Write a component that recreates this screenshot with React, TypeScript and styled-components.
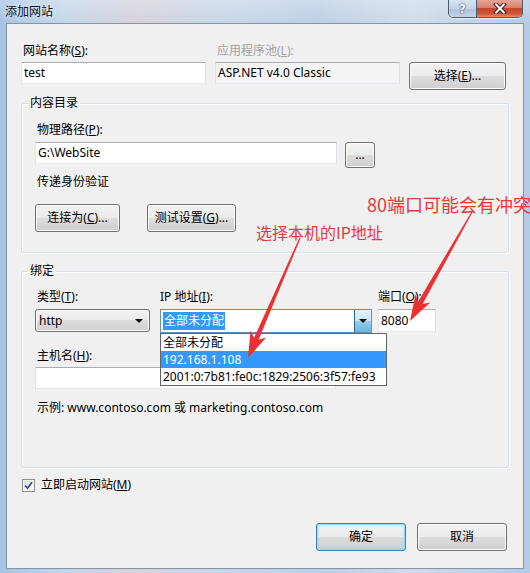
import React from "react";
import styled, { createGlobalStyle } from "styled-components";

const Global = createGlobalStyle`
  html, body { margin: 0; padding: 0; }
  body {
    width: 530px; height: 573px; overflow: hidden;
    font-family: "Noto Sans", "Noto Sans CJK SC", sans-serif;
    font-size: 12px; color: #000;
  }
  * { box-sizing: border-box; }
`;

const Window = styled.div`
  position: relative;
  width: 530px;
  height: 573px;
  display: flex;
  flex-direction: column;
  background:
    linear-gradient(180deg, rgba(255,255,255,0.25) 0px, rgba(255,255,255,0) 23px),
    linear-gradient(90deg, #a7c3e3 0%, #c4d6ea 12%, #d6d2dc 26%, #c7d7ea 42%, #bccfe6 60%, #cfdcea 78%, #b4cbe6 100%);
`;

const TitleBar = styled.div`
  height: 23px;
  display: flex;
  align-items: flex-start;
  padding: 0 7px 0 5px;
`;

const Caption = styled.div`
  margin-top: 3px;
  line-height: 16px;
  font-size: 12px;
  font-family: "Noto Sans CJK SC", sans-serif;
  color: #111;
  text-shadow: 0 0 6px rgba(255,255,255,0.9);
`;

const CaptionButtons = styled.div`
  margin-left: auto;
  display: flex;
  border: 1px solid #4b5d75;
  border-top: none;
  border-radius: 0 0 5px 5px;
  overflow: hidden;
  box-shadow: 0 1px 0 rgba(255,255,255,0.6);
`;

const HelpButton = styled.div`
  width: 28px;
  height: 17px;
  display: flex;
  align-items: center;
  justify-content: center;
  border-right: 1px solid #4b5d75;
  background: linear-gradient(180deg, #d9e4f1 0%, #c5d4e6 50%, #afc2da 51%, #c3d3e6 100%);
  color: #fff;
  font-family: "DejaVu Sans", sans-serif;
  font-weight: bold;
  font-size: 12px;
  line-height: 1;
  text-shadow: 0 0 1px #2b3b52, 0 0 2px #2b3b52;
`;

const CloseButton = styled.div`
  width: 45px;
  height: 17px;
  display: flex;
  align-items: center;
  justify-content: center;
  background: linear-gradient(180deg, #e8a597 0%, #d9806b 45%, #c4452c 50%, #d2553a 80%, #e58e71 100%);
`;

const Client = styled.div`
  flex: 1;
  margin: 0 6px 4px 6px;
  background: #f0f0f0;
  border: 1px solid #8294aa;
  display: flex;
  flex-direction: column;
  padding: 19px 14px 17px 14px;
`;

const TopGrid = styled.div`
  display: grid;
  grid-template-columns: 185px 185px 98px;
  grid-template-rows: 16px auto;
  column-gap: 9px;
  row-gap: 3px;
  align-items: start;
`;

const Label = styled.div<{ $disabled?: boolean; $pl?: number }>`
  line-height: 16px;
  height: 16px;
  white-space: nowrap;
  padding-left: ${(p) => (p.$pl ?? 2)}px;
  color: ${(p) => (p.$disabled ? "#a2a2a2" : "#000")};
`;

const SpacedLabel = styled(Label)<{ $mt: number }>`
  margin-top: ${(p) => p.$mt}px;
`;

const U = styled.span`
  text-decoration: underline;
  text-underline-offset: 1px;
`;

const TextBox = styled.div<{ $w?: number; $h?: number; $readonly?: boolean }>`
  width: ${(p) => (p.$w ? `${p.$w}px` : "100%")};
  height: ${(p) => p.$h ?? 22}px;
  border: 1px solid;
  border-color: #abadb3 #dbdfe6 #e3e9ef #e2e3ea;
  background: ${(p) => (p.$readonly ? "#f4f4f4" : "#fff")};
  padding-left: 2px;
  line-height: ${(p) => (p.$h ?? 22) - 2}px;
  white-space: nowrap;
  overflow: hidden;
`;

const Button = styled.div<{ $w: number; $h?: number; $default?: boolean }>`
  width: ${(p) => p.$w}px;
  height: ${(p) => p.$h ?? 28}px;
  border: 1px solid ${(p) => (p.$default ? "#3c7fb1" : "#707070")};
  border-radius: 3px;
  background: linear-gradient(180deg, #f2f2f2 0%, #ebebeb 49%, #dddddd 50%, #cfcfcf 100%);
  box-shadow: ${(p) =>
    p.$default
      ? "inset 0 0 0 1px #8ee0f9, inset 0 0 3px 1px rgba(120,215,250,0.55)"
      : "inset 0 0 0 1px #fcfcfc"};
  display: flex;
  align-items: center;
  justify-content: center;
  white-space: nowrap;
  line-height: 16px;
`;

const Group = styled.fieldset<{ $mt: number; $pt: number; $pb: number }>`
  margin: ${(p) => p.$mt}px 0 0 0;
  padding: ${(p) => p.$pt}px 13px ${(p) => p.$pb}px 13px;
  border: 1px solid #d5dfe5;
  border-radius: 3px;
  box-shadow: inset 1px 1px 0 #fff, 1px 1px 0 #fff;
  min-width: 0;
`;

const Legend = styled.legend`
  padding: 0 2px;
  margin-left: -7px;
  line-height: 16px;
  font-size: 12px;
`;

const Row = styled.div<{ $mt: number; $gap: number }>`
  display: flex;
  align-items: flex-start;
  margin-top: ${(p) => p.$mt}px;
  gap: ${(p) => p.$gap}px;
`;

const Field = styled.div<{ $w: number; $mr?: number }>`
  width: ${(p) => p.$w}px;
  margin-right: ${(p) => p.$mr ?? 0}px;
  display: flex;
  flex-direction: column;
  gap: 4px;
`;

const SelectBox = styled.div`
  position: relative;
  height: 23px;
  border: 1px solid #707070;
  border-radius: 3px;
  background: linear-gradient(180deg, #f2f2f2 0%, #ebebeb 49%, #dddddd 50%, #cfcfcf 100%);
  box-shadow: inset 0 0 0 1px #fcfcfc;
  display: flex;
  align-items: center;
  padding-left: 3px;
  line-height: 16px;
`;

const Caret = styled.span<{ $right: number }>`
  position: absolute;
  right: ${(p) => p.$right}px;
  top: 50%;
  margin-top: -2px;
  width: 0;
  height: 0;
  border-left: 4px solid transparent;
  border-right: 4px solid transparent;
  border-top: 4px solid #111;
`;

const ComboBox = styled.div`
  position: relative;
  height: 24px;
  border: 1px solid #5c93bc;
  background: #fff;
  display: flex;
  align-items: center;
  padding-left: 2px;
`;

const Highlight = styled.span`
  background: #3399ff;
  color: #fff;
  line-height: 18px;
  padding: 0 1px;
`;

const ComboButton = styled.div`
  position: absolute;
  right: 0;
  top: 0;
  bottom: 0;
  width: 17px;
  border-left: 1px solid #2c628b;
  background: linear-gradient(180deg, #e5f4fc 0%, #c4e5f6 50%, #98d1ef 51%, #68b3db 100%);
`;

const DropList = styled.div`
  position: absolute;
  left: -1px;
  top: calc(100% + 1px);
  width: 227px;
  border: 1px solid #646464;
  background: #fff;
  z-index: 5;
`;

const DropItem = styled.div<{ $sel?: boolean }>`
  height: 17px;
  line-height: 17px;
  padding-left: 2px;
  white-space: nowrap;
  background: ${(p) => (p.$sel ? "#3399ff" : "#fff")};
  color: ${(p) => (p.$sel ? "#fff" : "#000")};
`;

const CheckRow = styled.div`
  display: flex;
  align-items: center;
  gap: 6px;
  margin-top: 9px;
  margin-left: 1px;
  height: 16px;
  line-height: 16px;
`;

const CheckBox = styled.div`
  width: 13px;
  height: 13px;
  border: 1px solid #8e8f8f;
  background: linear-gradient(135deg, #dcdcdc 0%, #fdfdfd 100%);
  box-shadow: inset 0 0 0 1px #f4f4f4;
  display: flex;
  align-items: center;
  justify-content: center;
`;

const Footer = styled.div`
  margin-top: auto;
  margin-right: 2px;
  display: flex;
  justify-content: flex-end;
  gap: 11px;
`;

const Overlay = styled.svg`
  position: absolute;
  left: 0;
  top: 0;
  width: 530px;
  height: 573px;
  pointer-events: none;
  z-index: 20;
`;

const Note = styled.div<{ $x: number; $y: number; $size: number; $ls?: number }>`
  position: absolute;
  left: ${(p) => p.$x}px;
  top: ${(p) => p.$y}px;
  z-index: 21;
  color: #e23a3a;
  font-family: "Noto Sans CJK SC", sans-serif;
  font-size: ${(p) => p.$size}px;
  line-height: 20px;
  letter-spacing: ${(p) => p.$ls ?? 0}px;
  white-space: nowrap;
`;

function arrowPoints(x1: number, y1: number, x2: number, y2: number): string {
  const dx = x2 - x1;
  const dy = y2 - y1;
  const L = Math.hypot(dx, dy);
  const ux = dx / L;
  const uy = dy / L;
  const px = -uy;
  const py = ux;
  const headLen = 26;
  const headW = 17;
  const tailW = 1.2;
  const neckW = 5;
  const bx = x2 - ux * headLen;
  const by = y2 - uy * headLen;
  const nx = bx + ux * 5;
  const ny = by + uy * 5;
  const pts: [number, number][] = [
    [x1 + (px * tailW) / 2, y1 + (py * tailW) / 2],
    [nx + (px * neckW) / 2, ny + (py * neckW) / 2],
    [bx + (px * headW) / 2, by + (py * headW) / 2],
    [x2, y2],
    [bx - (px * headW) / 2, by - (py * headW) / 2],
    [nx - (px * neckW) / 2, ny - (py * neckW) / 2],
    [x1 - (px * tailW) / 2, y1 - (py * tailW) / 2],
  ];
  return pts.map(([a, b]) => `${a.toFixed(1)},${b.toFixed(1)}`).join(" ");
}

export default function App() {
  return (
    <>
      <Global />
      <Window>
        <TitleBar>
          <Caption>添加网站</Caption>
          <CaptionButtons>
            <HelpButton>?</HelpButton>
            <CloseButton>
              <svg width="14" height="11" viewBox="0 0 14 11">
                <path d="M3 1.5 L11 9.5 M11 1.5 L3 9.5" stroke="#3b1a14" strokeWidth="4" strokeLinecap="square" />
                <path d="M3 1.5 L11 9.5 M11 1.5 L3 9.5" stroke="#ffffff" strokeWidth="2" strokeLinecap="square" />
              </svg>
            </CloseButton>
          </CaptionButtons>
        </TitleBar>

        <Client>
          <TopGrid>
            <Label>网站名称(<U>S</U>):</Label>
            <Label $disabled>应用程序池(<U>L</U>):</Label>
            <span />
            <TextBox>test</TextBox>
            <TextBox $readonly>ASP.NET v4.0 Classic</TextBox>
            <Button $w={97}>选择(<U>E</U>)...</Button>
          </TopGrid>

          <Group $mt={5} $pt={11} $pb={20}>
            <Legend>内容目录</Legend>
            <Label>物理路径(<U>P</U>):</Label>
            <Row $mt={4} $gap={8}>
              <TextBox $w={302}>G:\WebSite</TextBox>
              <Button $w={30} $h={26}>...</Button>
            </Row>
            <SpacedLabel $mt={6}>传递身份验证</SpacedLabel>
            <Row $mt={14} $gap={27}>
              <Button $w={85}>连接为(<U>C</U>)...</Button>
              <Button $w={89}>测试设置(<U>G</U>)...</Button>
            </Row>
          </Group>

          <Group $mt={10} $pt={10} $pb={51}>
            <Legend>绑定</Legend>
            <Row $mt={0} $gap={0}>
              <Field $w={115} $mr={10}>
                <Label>类型(<U>T</U>):</Label>
                <SelectBox>
                  http
                  <Caret $right={6} />
                </SelectBox>
              </Field>
              <Field $w={212} $mr={6}>
                <Label $pl={0}>IP 地址(<U>I</U>):</Label>
                <ComboBox>
                  <Highlight>全部未分配</Highlight>
                  <ComboButton>
                    <Caret $right={4} />
                  </ComboButton>
                  <DropList>
                    <DropItem>全部未分配</DropItem>
                    <DropItem $sel>192.168.1.108</DropItem>
                    <DropItem>2001:0:7b81:fe0c:1829:2506:3f57:fe93</DropItem>
                  </DropList>
                </ComboBox>
              </Field>
              <Field $w={58}>
                <Label $pl={0}>端口(<U>O</U>):</Label>
                <TextBox $h={23}>8080</TextBox>
              </Field>
            </Row>
            <SpacedLabel $mt={15}>主机名(<U>H</U>):</SpacedLabel>
            <Row $mt={3} $gap={0}>
              <TextBox $w={301}></TextBox>
            </Row>
            <SpacedLabel $mt={11}>示例: www.contoso.com 或 marketing.contoso.com</SpacedLabel>
          </Group>

          <CheckRow>
            <CheckBox>
              <svg width="9" height="9" viewBox="0 0 9 9">
                <path d="M1 4.5 L3.5 7.2 L8 1.2" fill="none" stroke="#3b4f93" strokeWidth="1.8" />
              </svg>
            </CheckBox>
            <span>立即启动网站(<U>M</U>)</span>
          </CheckRow>

          <Footer>
            <Button $w={90} $default>确定</Button>
            <Button $w={90}>取消</Button>
          </Footer>
        </Client>

        <Note $x={367} $y={194} $size={18}>80端口可能会有冲突</Note>
        <Note $x={256} $y={222} $size={16}>选择本机的IP地址</Note>
        <Overlay viewBox="0 0 530 573">
          <polygon points={arrowPoints(300, 238, 248, 358)} fill="#ee2f2f" />
          <polygon points={arrowPoints(472, 212, 410, 321)} fill="#ee2f2f" />
        </Overlay>
      </Window>
    </>
  );
}
